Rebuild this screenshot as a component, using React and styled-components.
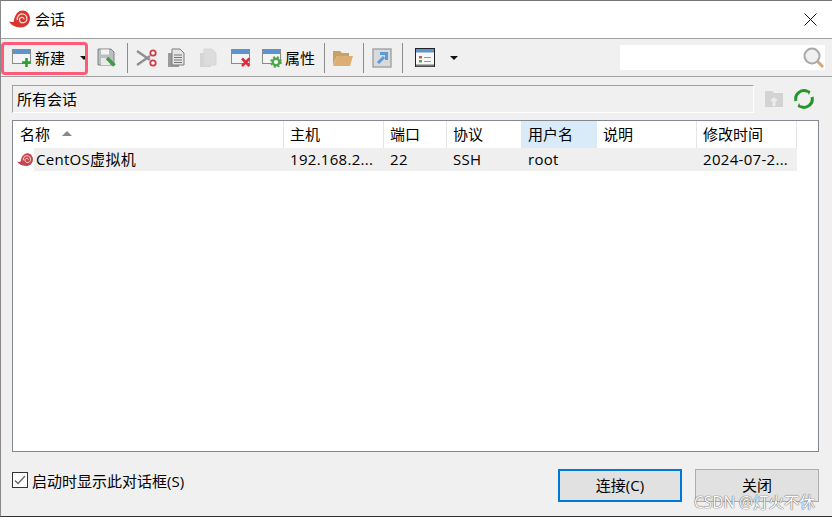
import styled, { createGlobalStyle } from "styled-components";

const GlobalStyle = createGlobalStyle`
  html, body {
    margin: 0;
    padding: 0;
    background: #f0f0f0;
  }
  body {
    font-family: "Open Sans", "Noto Sans CJK SC", sans-serif;
    font-size: 15px;
    color: #000;
  }
`;

const columns = [
  { title: "名称", width: 271, sort: true },
  { title: "主机", width: 100 },
  { title: "端口", width: 63 },
  { title: "协议", width: 75 },
  { title: "用户名", width: 75, hot: true },
  { title: "说明", width: 100 },
  { title: "修改时间", width: 100 },
];

const session = ["CentOS虚拟机", "192.168.2...", "22", "SSH", "root", "", "2024-07-2..."];

const Snail = ({ size = 21, color = "#d9352c" }) => (
  <svg width={size} height={size} viewBox="0 0 20 20">
    <path d="M0 12c2 .6 3.600.4 4.600-.2C5.400 6 8.500 1.500 12.800 1.500 16.800 1.500 20 4.800 20 9c0 5-4 8.500-8.800 8.500C6 17.500 2 15.500 0 12z" fill={color} />
    <path d="M8 10.500C7.300 7.500 9.500 4.700 12.300 4.700c2.700 0 4.700 2 4.700 4.500 0 2.300-1.800 4-3.900 4-1.800 0-3.100-1.300-3.100-2.900 0-1.400 1-2.400 2.300-2.400 1.100 0 1.900.8 1.900 1.800" fill="none" stroke="#fbd9d5" strokeWidth="1.200" />
  </svg>
);

const WindowBase = ({ children }) => (
  <svg width="20" height="20" viewBox="0 0 20 20">
    <rect x="0.500" y="1.500" width="18" height="14" fill="#f4f4f4" stroke="#8a8a8a" />
    <rect x="1" y="2" width="17" height="4" fill="#5d94cc" />
    {children}
  </svg>
);

const NewIcon = () => (
  <WindowBase>
    <path d="M14.500 10v9M10 14.500h9" stroke="#2f9e35" strokeWidth="2.600" />
  </WindowBase>
);

const SaveIcon = () => (
  <svg width="20" height="20" viewBox="0 0 20 20">
    <path d="M1 1h13l3 3v13H1z" fill="#b9bec0" stroke="#7f8588" />
    <rect x="4" y="1.500" width="8" height="5" fill="#f3f3f3" />
    <rect x="4" y="10" width="9" height="7" fill="#e9e9e9" />
    <path d="M10 10l7.500 7.500" stroke="#3c9e3f" strokeWidth="3.600" />
  </svg>
);

const CutIcon = () => (
  <svg width="22" height="20" viewBox="0 0 22 20">
    <path d="M1 3l13 9M1 17l13-9" stroke="#8d9092" strokeWidth="2.400" />
    <circle cx="17" cy="5" r="2.700" fill="#fff" stroke="#d33b45" strokeWidth="1.800" />
    <circle cx="17" cy="15" r="2.700" fill="#fff" stroke="#d33b45" strokeWidth="1.800" />
  </svg>
);

const PageIcon = ({ faded }) => (
  <svg width="20" height="20" viewBox="0 0 20 20">
    <g opacity={faded ? 0.45 : 1}>
      <rect x="1" y="5" width="11" height="14" fill={faded ? "#b5b5b5" : "#9a9a9a"} />
      <path d="M5 1h8l4 4v12H5z" fill={faded ? "#c4c4c4" : "#e4e4e4"} stroke={faded ? "#bbb" : "#7c7c7c"} />
      {!faded && <path d="M7 7h8M7 9.500h8M7 12h8M7 14.500h8" stroke="#777" />}
    </g>
  </svg>
);

const DeleteIcon = () => (
  <WindowBase>
    <path d="M11 10.500l7.500 7.500M18.500 10.500L11 18" stroke="#d6303c" strokeWidth="2.600" />
  </WindowBase>
);

const PropsIcon = () => (
  <WindowBase>
    <circle cx="14" cy="14" r="3.300" fill="#fff" stroke="#4da64a" strokeWidth="2.400" />
    <circle cx="14" cy="14" r="5" fill="none" stroke="#4da64a" strokeWidth="1.600" strokeDasharray="2 2" />
  </WindowBase>
);

const FolderIcon = () => (
  <svg width="20" height="18" viewBox="0 0 20 18">
    <path d="M0 2h7l2 2h7v3H4L0 16z" fill="#c9a068" />
    <path d="M4 7h16l-3 10H0z" fill="#dcae74" />
  </svg>
);

const LinkIcon = () => (
  <svg width="20" height="20" viewBox="0 0 20 20">
    <rect x="1" y="1" width="18" height="18" fill="#d8dadb" stroke="#a3a6a8" strokeWidth="1.500" />
    <path d="M6 15l6-6M8 5.500h6.500V12" fill="none" stroke="#5a9bd8" strokeWidth="3" />
  </svg>
);

const LayoutIcon = () => (
  <svg width="20" height="20" viewBox="0 0 20 20">
    <rect x="0.500" y="0.500" width="19" height="18" fill="#f7f7f7" stroke="#222" />
    <rect x="1" y="1" width="18" height="3.500" fill="#5d94cc" />
    <rect x="4" y="8" width="3" height="2.500" fill="#d9534f" />
    <rect x="4" y="12" width="3" height="2.500" fill="#56a858" />
    <path d="M9 9.500h7M9 13.500h7" stroke="#999" />
    <rect x="1" y="16.500" width="18" height="2" fill="#777" />
  </svg>
);

const SearchIcon = () => (
  <svg width="22" height="22" viewBox="0 0 22 22">
    <path d="M14 14l6 6" stroke="#d9a673" strokeWidth="3" />
    <circle cx="9" cy="9" r="7.500" fill="#f0f0f0" stroke="#a9a9a9" strokeWidth="2" />
  </svg>
);

const UploadIcon = () => (
  <svg width="19" height="18" viewBox="0 0 19 18">
    <path d="M0 1h7l2 2h9v14H0z" fill="#d3d3d3" />
    <path d="M9 7l-4 4h2.500v5h3v-5H13z" fill="#ededed" />
  </svg>
);

const RefreshIcon = () => (
  <svg width="20" height="20" viewBox="0 0 20 20" fill="none">
    <path d="M2 12A8.200 8.200 0 0 1 14 2.800" stroke="#24962b" strokeWidth="3" />
    <path d="M18 8A8.200 8.200 0 0 1 6 17.200" stroke="#24962b" strokeWidth="3" />
    <path d="M12.500 1l4 1-1.500 4zM7.500 19l-4-1L5 14z" fill="#24962b" />
  </svg>
);

const App = () => (
  <>
    <GlobalStyle />
    <Dialog>
      <TitleBar>
        <Snail />
        <Title>会话</Title>
        <CloseX viewBox="0 0 13 13">
          <path d="M0.500 0.500l12 12M12.500 0.500l-12 12" stroke="#111" fill="none" />
        </CloseX>
      </TitleBar>

      <Toolbar>
        <NewButton>
          <NewIcon />
          <ToolText>新建</ToolText>
          <Caret $left={12} />
        </NewButton>
        <Tool $left={9}><SaveIcon /></Tool>
        <Sep $left={10} />
        <Tool $left={8}><CutIcon /></Tool>
        <Tool $left={9}><PageIcon /></Tool>
        <Tool $left={12}><PageIcon faded /></Tool>
        <Tool $left={12}><DeleteIcon /></Tool>
        <Tool $left={11}>
          <PropsIcon />
          <ToolText>属性</ToolText>
        </Tool>
        <Sep $left={9} />
        <Tool $left={8}><FolderIcon /></Tool>
        <Sep $left={10} />
        <Tool $left={8}><LinkIcon /></Tool>
        <Sep $left={10} />
        <Tool $left={12}><LayoutIcon /></Tool>
        <Caret $left={15} />
        <SearchBox>
          <SearchIcon />
        </SearchBox>
      </Toolbar>

      <Content>
        <PathRow>
          <PathBox>所有会话</PathBox>
          <PathTools>
            <UploadIcon />
            <RefreshIcon />
          </PathTools>
        </PathRow>

        <Table>
          <HeaderRow>
            {columns.map((c, i) => (
              <HeadCell key={c.title} $width={c.width} $hot={c.hot} $first={i === 0}>
                {c.title}
                {c.sort && <SortArrow />}
              </HeadCell>
            ))}
          </HeaderRow>
          <SessionRow>
            <RowIcon>
              <Snail size={16} color="#c4474f" />
            </RowIcon>
            {session.map((text, i) => (
              <Cell key={i} $width={i === 0 ? columns[0].width - 21 : columns[i].width} $first={i === 0}>
                {text}
              </Cell>
            ))}
          </SessionRow>
        </Table>

        <Footer>
          <CheckLabel>
            <CheckBox viewBox="0 0 16 16">
              <rect x="0.500" y="0.500" width="15" height="15" fill="#fff" stroke="#333" />
              <path d="M3 8.500l3 3 7-7.500" fill="none" stroke="#666" strokeWidth="1.300" />
            </CheckBox>
            启动时显示此对话框(S)
          </CheckLabel>
          <Buttons>
            <Button $primary>连接(C)</Button>
            <Button>关闭</Button>
          </Buttons>
        </Footer>
      </Content>
      <Watermark>CSDN @灯火不休</Watermark>
    </Dialog>
  </>
);

const Dialog = styled.div`
  position: relative;
  width: 832px;
  height: 517px;
  box-sizing: border-box;
  border-top: 1px solid #777;
  border-left: 1px solid #888;
  border-bottom: 1px solid #333;
  background: #f0f0f0;
  overflow: hidden;
`;

const TitleBar = styled.div`
  height: 38px;
  box-sizing: border-box;
  display: flex;
  align-items: center;
  padding: 0 15px 0 8px;
  background: #fff;
  border-bottom: 1px solid #a0a0a0;
`;

const Title = styled.div`
  margin-left: 5px;
  padding-bottom: 2px;
`;

const CloseX = styled.svg`
  width: 13px;
  height: 13px;
  margin-left: auto;
`;

const Toolbar = styled.div`
  height: 38px;
  box-sizing: border-box;
  display: flex;
  align-items: center;
  padding: 0 7px 0 11px;
  border-bottom: 1px solid #a0a0a0;
`;

const NewButton = styled.div`
  position: relative;
  display: flex;
  align-items: center;
  gap: 3px;
  &::before {
    content: "";
    position: absolute;
    left: -11px;
    top: -6px;
    width: 87px;
    height: 33px;
    box-sizing: border-box;
    border: 3px solid #ff5a78;
    border-radius: 4px;
  }
`;

const Tool = styled.div`
  display: flex;
  align-items: center;
  gap: 3px;
  margin-left: ${(p) => p.$left}px;
`;

const ToolText = styled.span`
  line-height: 20px;
`;

const Caret = styled.span`
  width: 0;
  height: 0;
  margin-left: ${(p) => p.$left}px;
  border-left: 4.5px solid transparent;
  border-right: 4.5px solid transparent;
  border-top: 4px solid #111;
`;

const Sep = styled.span`
  width: 1px;
  height: 30px;
  margin-left: ${(p) => p.$left}px;
  background: #8c8c8c;
`;

const SearchBox = styled.div`
  display: flex;
  align-items: center;
  justify-content: flex-end;
  width: 205px;
  height: 25px;
  margin-left: auto;
  background: #fff;
`;

const Content = styled.div`
  padding: 8px 13px 0 11px;
`;

const PathRow = styled.div`
  display: flex;
  align-items: center;
`;

const PathBox = styled.div`
  width: 742px;
  height: 28px;
  box-sizing: border-box;
  display: flex;
  align-items: center;
  padding: 0 0 2px 4px;
  border-top: 1px solid #a0a0a0;
  border-left: 1px solid #a0a0a0;
  border-right: 1px solid #fff;
  border-bottom: 1px solid #fff;
`;

const PathTools = styled.div`
  display: flex;
  align-items: center;
  gap: 10px;
  margin-left: 11px;
`;

const Table = styled.div`
  height: 332px;
  box-sizing: border-box;
  margin-top: 7px;
  background: #fff;
  border: 1px solid #828790;
`;

const HeaderRow = styled.div`
  display: flex;
  height: 27px;
`;

const HeadCell = styled.div`
  width: ${(p) => p.$width}px;
  box-sizing: border-box;
  display: flex;
  align-items: center;
  padding: 0 0 2px ${(p) => (p.$first ? 7 : 6)}px;
  background: ${(p) => (p.$hot ? "#d9ebf9" : "#fff")};
  border-right: 1px solid ${(p) => (p.$hot ? "#d9ebf9" : "#e5e5e5")};
`;

const SortArrow = styled.span`
  width: 0;
  height: 0;
  margin-left: 12px;
  border-left: 5px solid transparent;
  border-right: 5px solid transparent;
  border-bottom: 5px solid #888;
`;

const SessionRow = styled.div`
  display: flex;
  height: 23px;
`;

const RowIcon = styled.div`
  width: 21px;
  display: flex;
  align-items: center;
  padding-left: 4px;
  box-sizing: border-box;
  background: #fff;
`;

const Cell = styled.div`
  width: ${(p) => p.$width}px;
  box-sizing: border-box;
  display: flex;
  align-items: center;
  padding: 0 0 2px ${(p) => (p.$first ? 2 : 6)}px;
  background: #efefef;
  white-space: nowrap;
  letter-spacing: 0.3px;
`;

const Footer = styled.div`
  display: flex;
  align-items: center;
  justify-content: space-between;
  margin-top: 17px;
`;

const CheckLabel = styled.label`
  display: flex;
  align-items: center;
  gap: 4px;
  margin-top: -11px;
`;

const CheckBox = styled.svg`
  width: 16px;
  height: 16px;
`;

const Buttons = styled.div`
  display: flex;
  gap: 13px;
`;

const Button = styled.div`
  width: 124px;
  height: 33px;
  box-sizing: border-box;
  display: flex;
  align-items: center;
  justify-content: center;
  padding-bottom: 3px;
  background: #e1e1e1;
  border: ${(p) => (p.$primary ? "2px solid #0078d7" : "1px solid #adadad")};
`;

const Watermark = styled.div`
  position: absolute;
  right: 17px;
  bottom: 6px;
  font-size: 15.5px;
  line-height: 15px;
  color: #fff;
  text-shadow: 0 0 1px #555, 0 0 1px #555;
`;

export default App;
